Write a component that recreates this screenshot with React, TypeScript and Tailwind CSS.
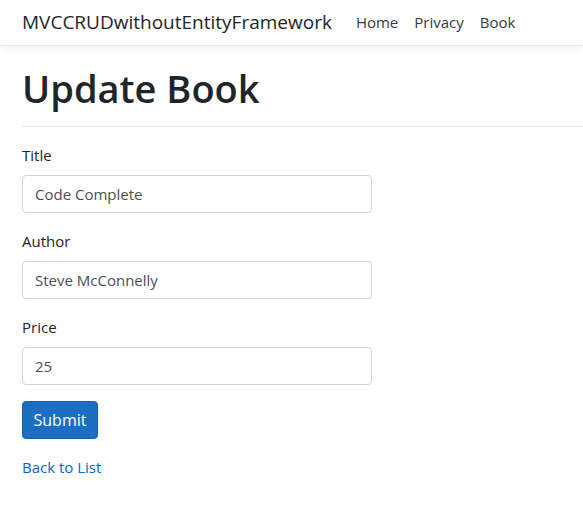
export default function App() {
  return (
    <div className="min-h-[512px] bg-white font-['Open_Sans','Noto_Sans',sans-serif] text-[#212529]">
      <header className="h-[46px] border-b border-[#e5e5e5] bg-white shadow-[0_4px_10px_rgba(0,0,0,0.05)]">
        <nav className="flex h-[45px] items-center px-[22px]">
          <a href="#" className="text-[19px] leading-none text-[#212529]">
            MVCCRUDwithoutEntityFramework
          </a>
          <ul className="ml-[24px] flex gap-[16px] text-[15px] text-[#343a40]">
            <li><a href="#">Home</a></li>
            <li><a href="#">Privacy</a></li>
            <li><a href="#">Book</a></li>
          </ul>
        </nav>
      </header>

      <main className="pt-[16px]">
        <h1 className="px-[22px] text-[38px] font-semibold leading-[52px]">Update Book</h1>
        <hr className="ml-[22px] mt-[12px] border-t border-[#e2e2e2]" />

        <form className="px-[22px] pt-[16px]" onSubmit={(e) => e.preventDefault()}>
          <div className="mb-[16px]">
            <label className="mb-[8px] block text-[15px] leading-[24px]">Title</label>
            <input
              defaultValue="Code Complete"
              className="block h-[38px] w-[350px] rounded-[4px] border border-[#ced4da] px-[12px] text-[15px] text-[#495057] outline-none"
            />
          </div>
          <div className="mb-[16px]">
            <label className="mb-[8px] block text-[15px] leading-[24px]">Author</label>
            <input
              defaultValue="Steve McConnelly"
              className="block h-[38px] w-[350px] rounded-[4px] border border-[#ced4da] px-[12px] text-[15px] text-[#495057] outline-none"
            />
          </div>
          <div className="mb-[16px]">
            <label className="mb-[8px] block text-[15px] leading-[24px]">Price</label>
            <input
              defaultValue="25"
              className="block h-[38px] w-[350px] rounded-[4px] border border-[#ced4da] px-[12px] text-[15px] text-[#495057] outline-none"
            />
          </div>
          <button
            type="submit"
            className="h-[38px] w-[76px] rounded-[4px] border border-[#1861ac] bg-[#1b6ec2] text-[16px] text-white"
          >
            Submit
          </button>
        </form>

        <div className="mt-[16px] px-[22px]">
          <a href="#" className="text-[15px] leading-[24px] text-[#0366d6]">Back to List</a>
        </div>
      </main>
    </div>
  );
}
